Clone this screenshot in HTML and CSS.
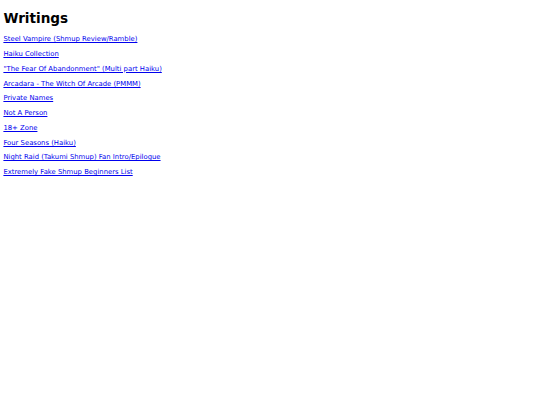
FILE: index.html
```html
<!DOCTYPE html>
<html>
<head>
<meta charset="utf-8">
<title>Writings</title>
<link rel="stylesheet" href="styles.css">
</head>
<body class="page">
<h1 class="title">Writings</h1>
<p class="item"><a class="link" href="#">Steel Vampire (Shmup Review/Ramble)</a></p>
<p class="item"><a class="link" href="#">Haiku Collection</a></p>
<p class="item"><a class="link" href="#">"The Fear Of Abandonment" (Multi part Haiku)</a></p>
<p class="item"><a class="link" href="#">Arcadara - The Witch Of Arcade (PMMM)</a></p>
<p class="item"><a class="link" href="#">Private Names</a></p>
<p class="item"><a class="link" href="#">Not A Person</a></p>
<p class="item"><a class="link" href="#">18+ Zone</a></p>
<p class="item"><a class="link" href="#">Four Seasons (Haiku)</a></p>
<p class="item"><a class="link" href="#">Night Raid (Takumi Shmup) Fan Intro/Epilogue</a></p>
<p class="item"><a class="link" href="#">Extremely Fake Shmup Beginners List</a></p>
</body>
</html>
```

FILE: styles.css
```css
html {
  background: #ffffff;
}
.page {
  margin: 3.4px;
  font-family: "DejaVu Sans", sans-serif;
  font-size: 6.85px;
  color: #000000;
}
.title {
  font-size: 13.6px;
  font-weight: bold;
  margin: 7px 0 9px;
}
.item {
  margin: 6.75px 0;
}
.link {
  color: #0000ee;
  text-decoration: underline;
}
```
